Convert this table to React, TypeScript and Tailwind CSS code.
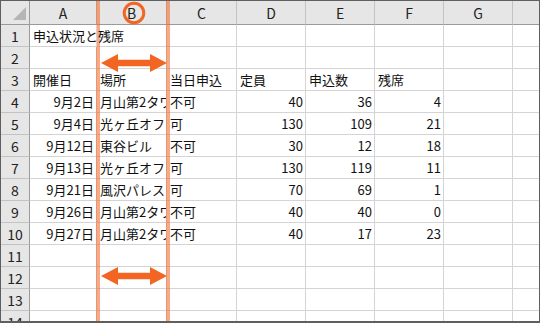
import React from "react";

type Cell = { t: string; r?: boolean };

const L = (t: string): Cell => ({ t });
const R = (t: string): Cell => ({ t, r: true });
const E: Cell = { t: "" };

const data: Cell[][] = [
  [L("申込状況と残席"), E, E, E, E, E, E, E],
  [E, E, E, E, E, E, E, E],
  [L("開催日"), L("場所"), L("当日申込"), L("定員"), L("申込数"), L("残席"), E, E],
  [R("9月2日"), L("月山第2タワー"), L("不可"), R("40"), R("36"), R("4"), E, E],
  [R("9月4日"), L("光ヶ丘オフィス"), L("可"), R("130"), R("109"), R("21"), E, E],
  [R("9月12日"), L("東谷ビル"), L("不可"), R("30"), R("12"), R("18"), E, E],
  [R("9月13日"), L("光ヶ丘オフィス"), L("可"), R("130"), R("119"), R("11"), E, E],
  [R("9月21日"), L("風沢パレス"), L("可"), R("70"), R("69"), R("1"), E, E],
  [R("9月26日"), L("月山第2タワー"), L("不可"), R("40"), R("40"), R("0"), E, E],
  [R("9月27日"), L("月山第2タワー"), L("不可"), R("40"), R("17"), R("23"), E, E],
  [E, E, E, E, E, E, E, E],
  [E, E, E, E, E, E, E, E],
  [E, E, E, E, E, E, E, E],
  [E, E, E, E, E, E, E, E],
];

const letters = ["A", "B", "C", "D", "E", "F", "G", ""];

function Arrow({ cy }: { cy: number }) {
  const pts = [
    [101, cy],
    [118, cy - 9],
    [118, cy - 3.3],
    [150, cy - 3.3],
    [150, cy - 9],
    [167, cy],
    [150, cy + 9],
    [150, cy + 3.3],
    [118, cy + 3.3],
    [118, cy + 9],
  ]
    .map((p) => p.join(","))
    .join(" ");
  return <polygon points={pts} fill="#f26522" />;
}

export default function App() {
  return (
    <div className="relative w-[540px] h-[323px] bg-white font-['Noto_Sans_CJK_JP',sans-serif] text-[13px] text-[#111]">
      <div className="w-[540px] h-[323px] overflow-hidden border-t border-l border-r border-b-2 border-[#5f5f5f]">
        <div className="grid grid-cols-[29px_67px_70px_70px_69px_69px_69px_69px_26px] grid-rows-[24px_repeat(14,22px)]">
          <div className="relative bg-[#e6e6e6] border-r border-b border-[#9a9a9a]">
            <svg width="29" height="24" className="absolute left-0 top-0">
              <polygon points="25,6 25,19 12,19" fill="#b5b5b5" />
            </svg>
          </div>
          {letters.map((l, i) => (
            <div
              key={"h" + i}
              className={`flex items-center justify-center bg-[#e6e6e6] border-b border-b-[#9a9a9a] ${
                i < 7 ? "border-r border-r-[#c3c3c3]" : ""
              } leading-none text-[14px] text-[#222]`}
            >
              {l}
            </div>
          ))}
          {data.map((row, ri) => (
            <React.Fragment key={"r" + ri}>
              <div className="flex items-center justify-center bg-[#e6e6e6] border-r border-r-[#9a9a9a] border-b border-b-[#c3c3c3] leading-none text-[14px] text-[#222]">
                {ri + 1}
              </div>
              {row.map((c, ci) => {
                const overflow = ri === 0 && ci === 0;
                return (
                  <div
                    key={ci}
                    className={`flex items-center border-b border-[#d4d4d4] ${
                      ci < 7 ? "border-r" : ""
                    } ${c.r ? "justify-end pr-[2px]" : "pl-[3px]"} ${
                      overflow ? "overflow-visible relative z-10" : "overflow-hidden"
                    } whitespace-nowrap leading-none`}
                  >
                    {c.t}
                  </div>
                );
              })}
            </React.Fragment>
          ))}
        </div>
      </div>
      <svg
        width="540"
        height="323"
        className="absolute left-0 top-0 pointer-events-none"
      >
        <rect x="96" y="1" width="4" height="320" fill="rgba(242,101,34,0.55)" />
        <rect x="166" y="1" width="4" height="320" fill="rgba(242,101,34,0.55)" />
        <circle cx="134" cy="13" r="9.8" fill="none" stroke="#f26522" strokeWidth="3" />
        <Arrow cy={63} />
        <Arrow cy={276} />
      </svg>
    </div>
  );
}
